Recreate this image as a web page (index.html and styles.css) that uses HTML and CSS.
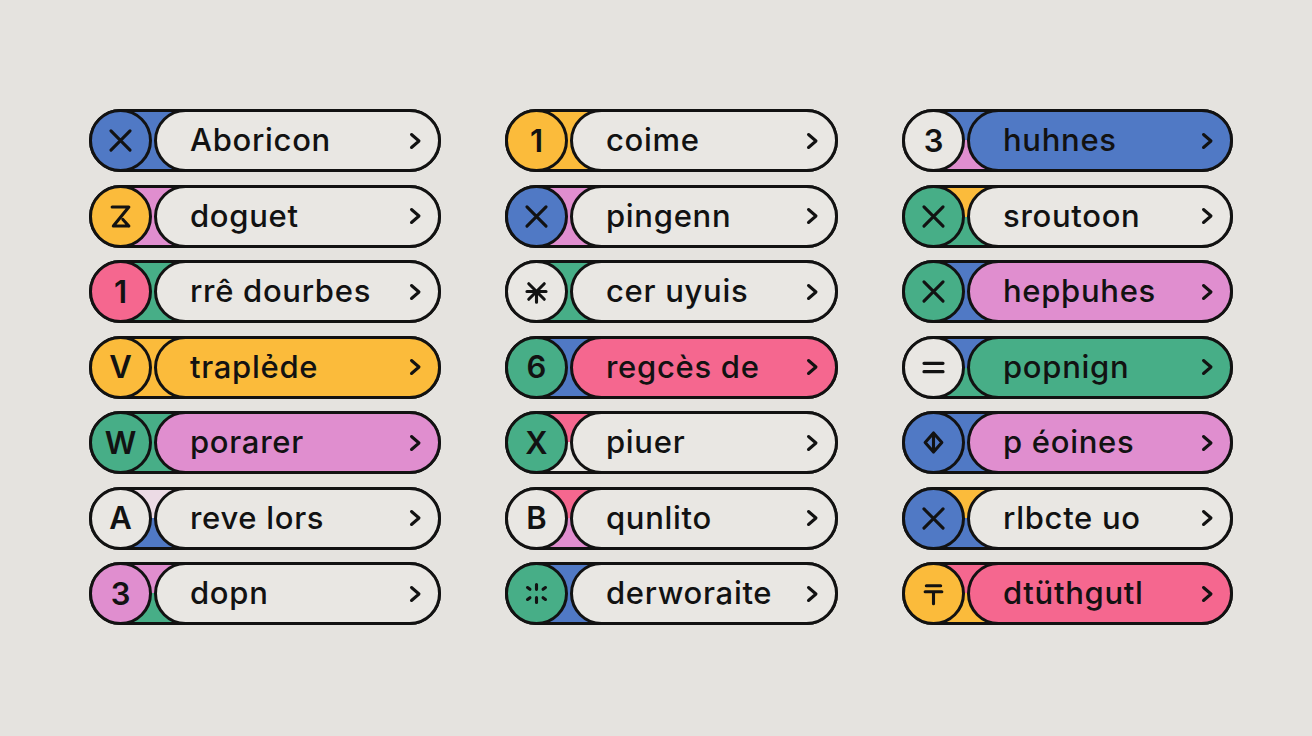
FILE: index.html
```html
<!DOCTYPE html>
<html lang="en">
<head>
<meta charset="utf-8">
<title>Pill list</title>
<link rel="stylesheet" href="styles.css">
</head>
<body>
<svg class="defs" width="0" height="0" aria-hidden="true">
  <defs>
    <symbol id="i-x" viewBox="0 0 26 26"><path d="M5 5 L21 21 M21 5 L5 21"/></symbol>
    <symbol id="i-z" viewBox="0 0 26 26"><path d="M6 5 H20 L7 21 H20 M15 15.5 L20 21"/></symbol>
    <symbol id="i-ast" viewBox="0 0 26 26"><path d="M6.5 6.5 L19.5 19.5 M19.5 6.5 L6.5 19.5 M5 13 H21 M13 13 V22"/></symbol>
    <symbol id="i-burst" viewBox="0 0 26 26"><path d="M5.5 8 L7.5 9.5 M13 5.5 V9.5 M20.5 8 L18.5 9.5 M5.5 18 L7.5 16.5 M13 16.5 V20.5 M20.5 18 L18.5 16.5"/></symbol>
    <symbol id="i-dia" viewBox="0 0 26 26"><path d="M13 5 L20 13 L13 21 L6 13 Z M13 5 V21"/></symbol>
    <symbol id="i-tenge" viewBox="0 0 26 26"><path d="M7 6.5 H19 M6 11.5 H20 M13 11.5 V21.5"/></symbol>
    <symbol id="i-eq" viewBox="0 0 26 26"><path d="M5 9.5 H21 M5 16.5 H21"/></symbol>
    <symbol id="i-chev" viewBox="0 0 13 18"><path d="M2.5 2.5 L10 9 L2.5 15.5"/></symbol>
  </defs>
</svg>

<main class="board">
  <section class="col col-1">
    <div class="item t-blue b-blue"><div class="circle f-blue"><svg class="ico"><use href="#i-x"/></svg></div><div class="pill f-light"><span class="label">Aboricon</span><svg class="chev"><use href="#i-chev"/></svg></div></div>
    <div class="item t-lilac b-lilac"><div class="circle f-yellow"><svg class="ico"><use href="#i-z"/></svg></div><div class="pill f-light"><span class="label">doguet</span><svg class="chev"><use href="#i-chev"/></svg></div></div>
    <div class="item t-green b-green"><div class="circle f-pink"><span class="glyph">1</span></div><div class="pill f-light"><span class="label">rrê dourbes</span><svg class="chev"><use href="#i-chev"/></svg></div></div>
    <div class="item t-yellow b-yellow"><div class="circle f-yellow"><span class="glyph">V</span></div><div class="pill f-yellow"><span class="label">traplẻde</span><svg class="chev"><use href="#i-chev"/></svg></div></div>
    <div class="item t-green b-green"><div class="circle f-green"><span class="glyph">W</span></div><div class="pill f-lilac"><span class="label">porarer</span><svg class="chev"><use href="#i-chev"/></svg></div></div>
    <div class="item t-faint b-blue"><div class="circle f-light"><span class="glyph">A</span></div><div class="pill f-light"><span class="label">reve lors</span><svg class="chev"><use href="#i-chev"/></svg></div></div>
    <div class="item t-lilac b-green"><div class="circle f-lilac"><span class="glyph">3</span></div><div class="pill f-light"><span class="label">dopn</span><svg class="chev"><use href="#i-chev"/></svg></div></div>
  </section>

  <section class="col col-2">
    <div class="item t-yellow b-yellow"><div class="circle f-yellow"><span class="glyph">1</span></div><div class="pill f-light"><span class="label">coime</span><svg class="chev"><use href="#i-chev"/></svg></div></div>
    <div class="item t-lilac b-lilac"><div class="circle f-blue"><svg class="ico"><use href="#i-x"/></svg></div><div class="pill f-light"><span class="label">pingenn</span><svg class="chev"><use href="#i-chev"/></svg></div></div>
    <div class="item t-green b-green"><div class="circle f-light"><svg class="ico"><use href="#i-ast"/></svg></div><div class="pill f-light"><span class="label">cer uyuis</span><svg class="chev"><use href="#i-chev"/></svg></div></div>
    <div class="item t-blue b-blue"><div class="circle f-green"><span class="glyph">6</span></div><div class="pill f-pink"><span class="label">regcès de</span><svg class="chev"><use href="#i-chev"/></svg></div></div>
    <div class="item t-pink b-light"><div class="circle f-green"><span class="glyph">X</span></div><div class="pill f-light"><span class="label">piuer</span><svg class="chev"><use href="#i-chev"/></svg></div></div>
    <div class="item t-pink b-lilac"><div class="circle f-light"><span class="glyph">B</span></div><div class="pill f-light"><span class="label">qunlito</span><svg class="chev"><use href="#i-chev"/></svg></div></div>
    <div class="item t-blue b-blue"><div class="circle f-green"><svg class="ico"><use href="#i-burst"/></svg></div><div class="pill f-light"><span class="label">derworaite</span><svg class="chev"><use href="#i-chev"/></svg></div></div>
  </section>

  <section class="col col-3">
    <div class="item t-blue b-lilac"><div class="circle f-light"><span class="glyph">3</span></div><div class="pill f-blue"><span class="label">huhnes</span><svg class="chev"><use href="#i-chev"/></svg></div></div>
    <div class="item t-yellow b-green"><div class="circle f-green"><svg class="ico"><use href="#i-x"/></svg></div><div class="pill f-light"><span class="label">sroutoon</span><svg class="chev"><use href="#i-chev"/></svg></div></div>
    <div class="item t-blue b-blue"><div class="circle f-green"><svg class="ico"><use href="#i-x"/></svg></div><div class="pill f-lilac"><span class="label">hepþuhes</span><svg class="chev"><use href="#i-chev"/></svg></div></div>
    <div class="item t-blue b-green"><div class="circle f-light"><svg class="ico"><use href="#i-eq"/></svg></div><div class="pill f-green"><span class="label">popnign</span><svg class="chev"><use href="#i-chev"/></svg></div></div>
    <div class="item t-blue b-blue"><div class="circle f-blue"><svg class="ico"><use href="#i-dia"/></svg></div><div class="pill f-lilac"><span class="label">p éoines</span><svg class="chev"><use href="#i-chev"/></svg></div></div>
    <div class="item t-yellow b-blue"><div class="circle f-blue"><svg class="ico"><use href="#i-x"/></svg></div><div class="pill f-light"><span class="label">rlbcte uo</span><svg class="chev"><use href="#i-chev"/></svg></div></div>
    <div class="item t-pink b-yellow"><div class="circle f-yellow"><svg class="ico"><use href="#i-tenge"/></svg></div><div class="pill f-pink"><span class="label">dtüthgutl</span><svg class="chev"><use href="#i-chev"/></svg></div></div>
  </section>
</main>
</body>
</html>
```

FILE: styles.css
```css
:root {
  --ink: #121212;
  --bg: #e5e3df;
  --light: #e9e7e3;
  --blue: #5079c5;
  --yellow: #fbbb3b;
  --green: #47ae87;
  --pink: #f5678f;
  --lilac: #e08ecf;
  --faint: #ecdbe5;
}

html, body {
  margin: 0;
  padding: 0;
}

body {
  background: var(--bg);
  font-family: Inter, "Noto Sans", sans-serif;
  color: var(--ink);
  width: 1312px;
  height: 736px;
  overflow: hidden;
}

.defs {
  position: absolute;
  width: 0;
  height: 0;
}

.board {
  display: grid;
  grid-template-columns: 352px 333px 331px;
  column-gap: 64px;
  padding: 109px 0 0 89px;
}

.col {
  display: flex;
  flex-direction: column;
  gap: 12.5px;
}

.item {
  display: flex;
  height: 63px;
  box-sizing: border-box;
  border: 3px solid var(--ink);
  border-radius: 32px;
  background: linear-gradient(to bottom, var(--t) 50%, var(--b) 50%);
}

.circle {
  flex: none;
  width: 63px;
  height: 63px;
  box-sizing: border-box;
  margin: -3px 0 -3px -3px;
  border: 3px solid var(--ink);
  border-radius: 50%;
  display: flex;
  align-items: center;
  justify-content: center;
}

.pill {
  flex: 1;
  height: 63px;
  box-sizing: border-box;
  margin: -3px -3px -3px 2px;
  border: 3px solid var(--ink);
  border-radius: 32px;
  display: flex;
  align-items: center;
  padding: 0 16px 0 33px;
}

.label {
  flex: 1;
  font-size: 31px;
  font-weight: 500;
  letter-spacing: 0.7px;
  line-height: 1;
  white-space: nowrap;
  padding-bottom: 2px;
}

.glyph {
  font-size: 31px;
  font-weight: 600;
  line-height: 1;
  padding-bottom: 1px;
}

.ico {
  width: 31px;
  height: 31px;
  fill: none;
  stroke: var(--ink);
  stroke-width: 2.6;
  stroke-linecap: round;
  stroke-linejoin: round;
}

.chev {
  flex: none;
  width: 13px;
  height: 18px;
  fill: none;
  stroke: var(--ink);
  stroke-width: 3;
  stroke-linecap: round;
  stroke-linejoin: round;
}

.t-blue { --t: var(--blue); }
.t-yellow { --t: var(--yellow); }
.t-green { --t: var(--green); }
.t-pink { --t: var(--pink); }
.t-lilac { --t: var(--lilac); }
.t-faint { --t: var(--faint); }
.t-light { --t: var(--light); }

.b-blue { --b: var(--blue); }
.b-yellow { --b: var(--yellow); }
.b-green { --b: var(--green); }
.b-pink { --b: var(--pink); }
.b-lilac { --b: var(--lilac); }
.b-light { --b: var(--light); }

.f-blue { background: var(--blue); }
.f-yellow { background: var(--yellow); }
.f-green { background: var(--green); }
.f-pink { background: var(--pink); }
.f-lilac { background: var(--lilac); }
.f-light { background: var(--light); }
```
